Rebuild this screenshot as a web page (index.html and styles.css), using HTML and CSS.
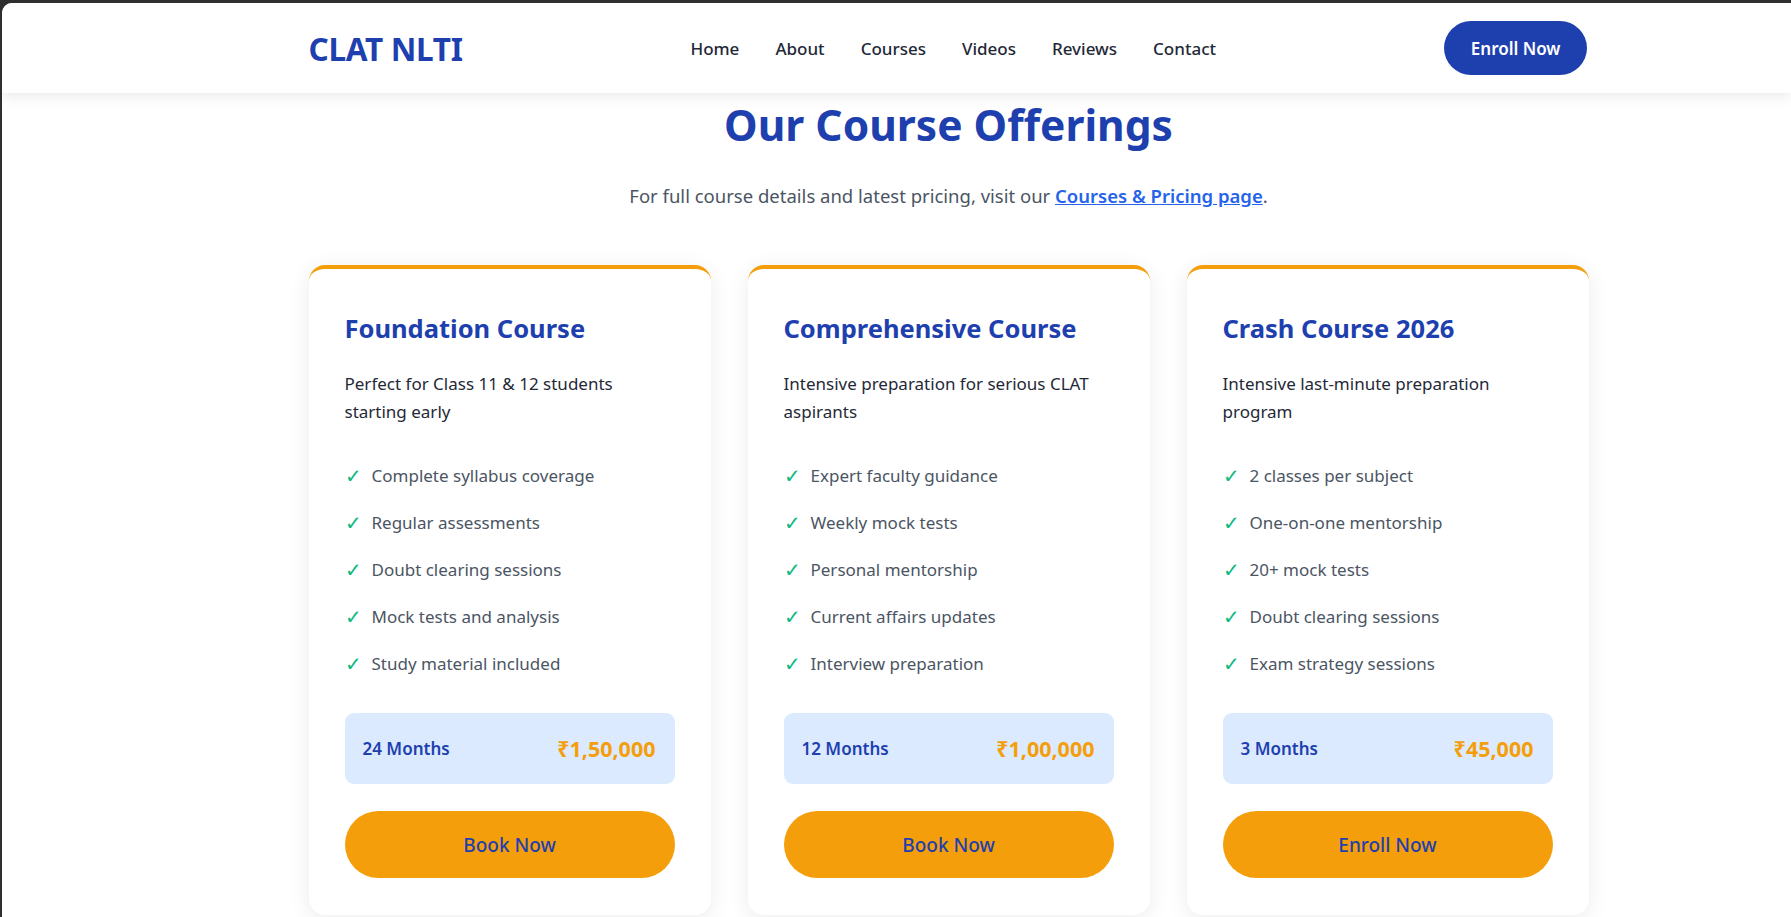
FILE: index.html
```html
<!DOCTYPE html>
<html lang="en">
<head>
<meta charset="utf-8">
<title>CLAT NLTI - Courses</title>
<link rel="stylesheet" href="styles.css">
</head>
<body>
<div class="frame">
  <header class="site-header">
    <div class="container header-inner">
      <a class="logo" href="#">CLAT NLTI</a>
      <nav class="main-nav">
        <a href="#">Home</a>
        <a href="#">About</a>
        <a href="#">Courses</a>
        <a href="#">Videos</a>
        <a href="#">Reviews</a>
        <a href="#">Contact</a>
      </nav>
      <a class="btn-enroll" href="#">Enroll Now</a>
    </div>
  </header>

  <section class="courses">
    <div class="container">
      <h1 class="section-title">Our Course Offerings</h1>
      <p class="section-sub">For full course details and latest pricing, visit our <a href="#">Courses &amp; Pricing page</a>.</p>

      <div class="card-grid">
        <article class="card">
          <h2 class="card-title">Foundation Course</h2>
          <p class="card-desc">Perfect for Class 11 &amp; 12 students starting early</p>
          <ul class="features">
            <li><span class="tick">✓</span>Complete syllabus coverage</li>
            <li><span class="tick">✓</span>Regular assessments</li>
            <li><span class="tick">✓</span>Doubt clearing sessions</li>
            <li><span class="tick">✓</span>Mock tests and analysis</li>
            <li><span class="tick">✓</span>Study material included</li>
          </ul>
          <div class="price-box">
            <span class="duration">24 Months</span>
            <span class="price">₹1,50,000</span>
          </div>
          <a class="btn-card" href="#">Book Now</a>
        </article>

        <article class="card">
          <h2 class="card-title">Comprehensive Course</h2>
          <p class="card-desc">Intensive preparation for serious CLAT aspirants</p>
          <ul class="features">
            <li><span class="tick">✓</span>Expert faculty guidance</li>
            <li><span class="tick">✓</span>Weekly mock tests</li>
            <li><span class="tick">✓</span>Personal mentorship</li>
            <li><span class="tick">✓</span>Current affairs updates</li>
            <li><span class="tick">✓</span>Interview preparation</li>
          </ul>
          <div class="price-box">
            <span class="duration">12 Months</span>
            <span class="price">₹1,00,000</span>
          </div>
          <a class="btn-card" href="#">Book Now</a>
        </article>

        <article class="card">
          <h2 class="card-title">Crash Course 2026</h2>
          <p class="card-desc">Intensive last-minute preparation program</p>
          <ul class="features">
            <li><span class="tick">✓</span>2 classes per subject</li>
            <li><span class="tick">✓</span>One-on-one mentorship</li>
            <li><span class="tick">✓</span>20+ mock tests</li>
            <li><span class="tick">✓</span>Doubt clearing sessions</li>
            <li><span class="tick">✓</span>Exam strategy sessions</li>
          </ul>
          <div class="price-box">
            <span class="duration">3 Months</span>
            <span class="price">₹45,000</span>
          </div>
          <a class="btn-card" href="#">Enroll Now</a>
        </article>
      </div>
    </div>
  </section>
</div>
</body>
</html>
```

FILE: styles.css
```css
* { box-sizing: border-box; }

html, body {
  margin: 0;
  padding: 0;
  height: 100%;
  overflow: hidden;
  background: #2f2f2f;
}

body {
  font-family: "Noto Sans", "Open Sans", Arial, sans-serif;
  color: #1f2937;
}

a { text-decoration: none; color: inherit; }

.frame {
  margin: 3px 0 0 2px;
  min-height: 100%;
  background: #ffffff;
  border-top-left-radius: 10px;
  overflow: hidden;
}

/* page is scrolled/cropped: content column sits right of the frame centre */
.container {
  width: 1280px;
  margin-left: calc(50% - 588px);
}

.site-header {
  height: 90px;
  background: #ffffff;
  box-shadow: 0 2px 14px rgba(0, 0, 0, 0.10);
  position: relative;
  z-index: 2;
}

.header-inner {
  height: 100%;
  display: flex;
  align-items: center;
  justify-content: space-between;
  padding: 0 1px 0 0;
}

.logo {
  font-size: 31.5px;
  font-weight: 700;
  color: #1e40af;
  letter-spacing: -0.3px;
}

.main-nav {
  display: flex;
  gap: 36px;
  font-size: 17px;
  font-weight: 500;
  color: #1f2937;
}

.btn-enroll {
  background: #1e40af;
  color: #ffffff;
  font-size: 17px;
  font-weight: 600;
  height: 54px;
  padding: 0 27px;
  display: flex;
  align-items: center;
  border-radius: 27px;
}

.courses {
  padding: 2px 0 40px;
}

.section-title {
  margin: 0;
  text-align: center;
  font-size: 42.5px;
  font-weight: 700;
  color: #1e40af;
  line-height: 1.4;
}

.section-sub {
  margin: 28px 0 0;
  text-align: center;
  font-size: 18.5px;
  color: #4b5563;
}

.section-sub a {
  color: #2563eb;
  font-weight: 600;
  text-decoration: underline;
}

.card-grid {
  margin-top: 57px;
  display: grid;
  grid-template-columns: repeat(3, 1fr);
  gap: 37px;
}

.card {
  background: #ffffff;
  border-radius: 16px;
  border-top: 4px solid #f59e0b;
  box-shadow: 0 4px 22px rgba(0, 0, 0, 0.08);
  padding: 42px 36px 37px;
  display: flex;
  flex-direction: column;
}

.card-title {
  margin: 0;
  font-size: 25.5px;
  font-weight: 700;
  color: #1e40af;
  line-height: 1.4;
}

.card-desc {
  margin: 24px 0 0;
  font-size: 17px;
  line-height: 28px;
  color: #1f2937;
}

.features {
  list-style: none;
  margin: 26px 0 0;
  padding: 0;
}

.features li {
  display: flex;
  align-items: center;
  font-size: 17px;
  color: #4b5563;
  height: 47px;
}

.tick {
  color: #10b981;
  font-weight: 400;
  font-size: 20px;
  width: 27px;
  flex: none;
}

.price-box {
  margin-top: 26px;
  background: #dbeafe;
  border-radius: 9px;
  height: 71px;
  padding: 0 19px 0 18px;
  display: flex;
  align-items: center;
  justify-content: space-between;
}

.duration {
  font-size: 17px;
  font-weight: 600;
  color: #1e40af;
}

.price {
  font-size: 21.5px;
  font-weight: 700;
  color: #f59e0b;
}

.btn-card {
  margin-top: 27px;
  height: 67px;
  border-radius: 34px;
  background: #f59e0b;
  color: #1e40af;
  font-size: 19px;
  font-weight: 500;
  display: flex;
  align-items: center;
  justify-content: center;
}
```
